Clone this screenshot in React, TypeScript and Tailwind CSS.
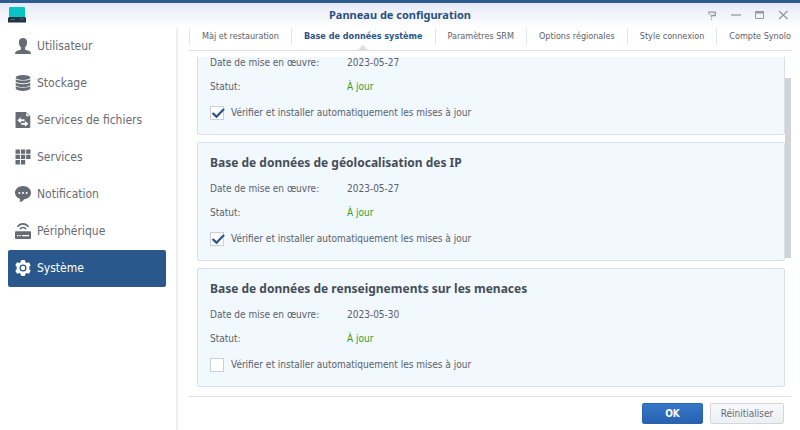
import React from 'react';

const sections = [
    { id: 'user', label: 'Utilisateur' },
    { id: 'storage', label: 'Stockage' },
    { id: 'files', label: 'Services de fichiers' },
    { id: 'services', label: 'Services' },
    { id: 'notification', label: 'Notification' },
    { id: 'device', label: 'Périphérique' },
    { id: 'system', label: 'Système' },
];

const tabs = [
    'Màj et restauration',
    'Base de données système',
    'Paramètres SRM',
    'Options régionales',
    'Style connexion',
    'Compte Synolo',
];

interface Database {
    id: string;
    title?: string;
    date: string;
    auto: boolean;
}

const databases: Database[] = [
    { id: 'apps', date: '2023-05-27', auto: true },
    { id: 'geoip', title: 'Base de données de géolocalisation des IP', date: '2023-05-27', auto: true },
    { id: 'threats', title: 'Base de données de renseignements sur les menaces', date: '2023-05-30', auto: false },
];

const SectionIcon: React.FC<{ id: string }> = ({ id }) => (
    <svg viewBox="0 0 16 16" className="w-4 h-4 shrink-0" fill="currentColor" aria-hidden="true">
        {id === 'user' && (
            <path d="M8 0C5.400 0 3.900 1.700 3.900 4.200c0 2.200.8 4 2.100 5.200v1.800c-.5.700-1.500 1-3 1.400C1.200 13.100.2 13.800 0 16h16c-.2-2.200-1.200-2.900-3-3.400-1.500-.4-2.500-.7-3-1.400V9.400c1.300-1.200 2.100-3 2.100-5.200C12.100 1.700 10.600 0 8 0z" />
        )}
        {id === 'storage' && (
            <>
                <ellipse cx="8" cy="2.500" rx="7.300" ry="2.500" />
                <path d="M.7 3.900c1.500 2.200 13.100 2.200 14.600 0v2.400c-1.500 2.700-13.100 2.700-14.600 0z" />
                <path d="M.7 7.500c1.500 2.200 13.100 2.200 14.600 0v2.400c-1.500 2.700-13.100 2.700-14.600 0z" />
                <path d="M.7 11.100c1.500 2.200 13.100 2.200 14.600 0v2.500c-1.500 3.200-13.100 3.200-14.600 0z" />
            </>
        )}
        {id === 'files' && (
            <>
                <path d="M1.500 0H11l4.300 4.300V15a1 1 0 0 1-1 1H1.500a1 1 0 0 1-1-1V1a1 1 0 0 1 1-1z" />
                <path d="M11.200 1v3.200h3.200z" fill="#fff" />
                <path d="M2.300 8.200 5.800 5.300v2h3.700v1.900H5.800v2z M13.400 11.800 9.900 8.900v2H6.300v1.900h3.600v2z" fill="#fff" />
            </>
        )}
        {id === 'services' && (
            <path d="M.5.500h4.400v4.300H.5zM5.900.500h4.300v4.300H5.900zM11.200.500h4.300v4.300h-4.300zM.5 5.800h4.400v4.300H.5zM5.900 5.800h4.300v4.300H5.900zM11.200 5.800h4.300v4.300h-4.300zM.5 11.100h4.400v4.400H.5zM5.900 11.100h4.300v4.400H5.900z" />
        )}
        {id === 'notification' && (
            <>
                <path d="M8 0c4.500 0 8 2.900 8 6.700 0 3.500-2.900 6.100-6.800 6.600C8.200 14.900 6.600 16 4.300 16c.7-.9 1-1.900.8-3.100C2.100 12 0 9.600 0 6.700 0 2.900 3.500 0 8 0z" />
                <circle cx="4.400" cy="6.900" r="1" fill="#fff" />
                <circle cx="8" cy="6.900" r="1" fill="#fff" />
                <circle cx="11.600" cy="6.900" r="1" fill="#fff" />
            </>
        )}
        {id === 'device' && (
            <>
                <path d="M2.500 3.900C5.200-.2 10.800-.2 13.500 3.900M5 6.200c1.500-2.200 4.500-2.200 6 0" fill="none" stroke="currentColor" strokeWidth="1.600" />
                <path d="M1 8.200h14a1 1 0 0 1 1 1V15a1 1 0 0 1-1 1H1a1 1 0 0 1-1-1V9.200a1 1 0 0 1 1-1z" />
                <path d="M2 12.700h1.400M4.400 12.700h1.400M7 12.700h7" stroke="#fff" strokeWidth="1.200" />
            </>
        )}
        {id === 'system' && (
            <path
                fillRule="evenodd"
                d="M6.200 0h3.600l.5 2.100 1.400.8 2.200-.7 1.800 3.100L14.300 6.800v2.400l1.400 1.500-1.800 3.100-2.200-.7-1.400.8L9.800 16H6.200l-.5-2.100-1.400-.8-2.200.7-1.800-3.100L1.700 9.200V6.800L.3 5.300l1.800-3.100 2.200.7 1.400-.8zM8 4.500a3.500 3.500 0 1 0 0 7 3.500 3.500 0 0 0 0-7zM8 5.800a2.200 2.200 0 1 1 0 4.400 2.200 2.200 0 0 1 0-4.400z"
            />
        )}
    </svg>
);

const AppLogo = () => (
    <svg viewBox="0 0 18 16" className="w-[18px] h-4" aria-hidden="true">
        <rect x="1" width="16" height="12" rx="1" fill="#08c4c4" />
        <path d="M1 10h16l1 1v4.500H0V11z" fill="#1e3343" />
        <path d="M2.500 12.500h4.500M11.500 12.500c1-1.700 3.300-1.700 4.300 0M13 13h1.500" stroke="#5d7684" strokeWidth=".8" fill="none" />
    </svg>
);

const TitleBar = () => (
    <header className="grid grid-cols-[1fr_auto_1fr] items-center h-[28px] px-2 pb-px border-t-3 border-[#2b5b91] bg-linear-to-b from-[#e6eaf6] to-white">
        <AppLogo />
        <h1 className="font-['Noto_Sans',sans-serif] text-[11px] leading-4 font-bold text-[#2b5080]">Panneau de configuration</h1>
        <div className="flex justify-end gap-2 text-[#9499a3]">
            <button type="button" aria-label="Aide" className="w-4 h-4">
                <svg viewBox="0 0 16 16" fill="none" stroke="currentColor" strokeWidth="1.300">
                    <path d="M4 5.200h7.300v3.300H7.500v2M7.500 11.500v1.300M4.500 7.200h1.500" />
                </svg>
            </button>
            <button type="button" aria-label="Réduire" className="w-4 h-4">
                <svg viewBox="0 0 16 16" fill="none" stroke="currentColor" strokeWidth="1.300">
                    <path d="M3 8h10" />
                </svg>
            </button>
            <button type="button" aria-label="Agrandir" className="w-4 h-4">
                <svg viewBox="0 0 16 16" fill="none" stroke="currentColor">
                    <path d="M3.500 4.500h8v7h-8z" />
                    <path d="M3 5.500h9" strokeWidth="2" />
                </svg>
            </button>
            <button type="button" aria-label="Fermer" className="w-4 h-4">
                <svg viewBox="0 0 16 16" fill="none" stroke="currentColor" strokeWidth="1.300">
                    <path d="m3 4 8.500 8M11.500 4 3 12" />
                </svg>
            </button>
        </div>
    </header>
);

const Sidebar = () => (
    <nav className="w-[178px] shrink-0 pl-2 pr-[10px] border-r-2 border-[#eeeff2]">
        <ul>
            {sections.map((s) => (
                <li key={s.id}>
                    <a
                        href={`#${s.id}`}
                        className={
                            s.id === 'system'
                                ? 'flex items-center gap-[6px] h-[37px] px-[7px] pb-px rounded-xs text-[12px] bg-[#2a588c] text-white'
                                : 'flex items-center gap-[6px] h-[37px] px-[7px] pb-px rounded-xs text-[12px] text-[#666b74]'
                        }
                    >
                        <SectionIcon id={s.id} />
                        {s.label}
                    </a>
                </li>
            ))}
        </ul>
    </nav>
);

const Tabs = () => (
    <div role="tablist" className="flex h-[23px] overflow-hidden border-b border-[#dcdee1] text-[9px] whitespace-nowrap">
        {tabs.map((label, i) => (
            <div key={label} className="relative shrink-0">
                <button
                    type="button"
                    role="tab"
                    aria-selected={i === 1}
                    className={
                        i === 1
                            ? 'h-[17px] px-3 border-l border-[#e4e6e9] font-bold text-[#2b5587]'
                            : 'h-[17px] px-3 border-l border-[#e4e6e9] text-[#5c6169]'
                    }
                >
                    {label}
                </button>
                {i === 1 && (
                    <svg viewBox="0 0 10 5" className="absolute bottom-0 left-1/2 -translate-x-1/2 w-[10px] h-[5px]" aria-hidden="true">
                        <path d="M0 5 5 0l5 5z" fill="#dcdee1" />
                    </svg>
                )}
            </div>
        ))}
    </div>
);

const DatabaseCard: React.FC<{ db: Database }> = ({ db }) => (
    <section className="shrink-0 px-3 pt-[10px] pb-2 border border-[#d8e0e9] rounded-xs bg-[#f1f8fe] text-[10px] text-[#5a616a]">
        {db.title && (
            <h2 className="mb-1 font-['Noto_Sans',sans-serif] text-[12px] leading-5 font-bold text-[#464e58]">{db.title}</h2>
        )}
        <dl className="grid grid-cols-[137px_1fr] leading-6">
            <dt>Date de mise en œuvre:</dt>
            <dd>{db.date}</dd>
            <dt>Statut:</dt>
            <dd className="text-[#3b9a2c]">À jour</dd>
        </dl>
        <label className="flex items-center gap-[7px] h-[27px]">
            <span className="relative flex">
                <input
                    type="checkbox"
                    defaultChecked={db.auto}
                    className="peer appearance-none w-[14px] h-[14px] border border-[#c9d0d8] bg-white"
                />
                <svg viewBox="0 0 14 14" className="absolute inset-0 w-[14px] h-[14px] overflow-visible hidden peer-checked:block pointer-events-none" fill="none" aria-hidden="true">
                    <path d="m2.500 7 4 3.700L14 3" stroke="#2b5587" strokeWidth="2.300" />
                </svg>
            </span>
            Vérifier et installer automatiquement les mises à jour
        </label>
    </section>
);

export default function App() {
    return (
        <div className="flex flex-col h-screen overflow-hidden bg-white font-['DejaVu_Sans_Condensed','DejaVu_Sans',sans-serif]">
            <TitleBar />
            <div className="flex flex-1 min-h-0">
                <Sidebar />
                <main className="flex flex-col flex-1 min-w-0 pl-[11px] pr-[9px]">
                    <Tabs />
                    <div className="flex flex-1 min-h-0 mt-[6px] pl-2 border-b border-[#e0e2e5]">
                        <div className="flex flex-col justify-end flex-1 min-w-0 gap-[7px] pb-[9px] overflow-hidden">
                            {databases.map((db) => (
                                <DatabaseCard key={db.id} db={db} />
                            ))}
                        </div>
                        <div className="w-[6px] pt-[21px]">
                            <div className="h-[180px] bg-[#d2d3d7]" />
                        </div>
                    </div>
                    <footer className="flex justify-end gap-[7px] h-[33px] pt-[6px] pr-[7px] text-[10px]">
                        <button
                            type="button"
                            className="w-[61px] h-[21px] border border-[#2a64ad] rounded-xs bg-linear-to-b from-[#3577c8] to-[#2762b0] font-bold text-white"
                        >
                            OK
                        </button>
                        <button
                            type="button"
                            className="w-[74px] h-[21px] border border-[#d3d7dc] rounded-xs bg-linear-to-b from-[#f8f9fb] to-[#eceff3] text-[#666c75]"
                        >
                            Réinitialiser
                        </button>
                    </footer>
                </main>
            </div>
        </div>
    );
}
